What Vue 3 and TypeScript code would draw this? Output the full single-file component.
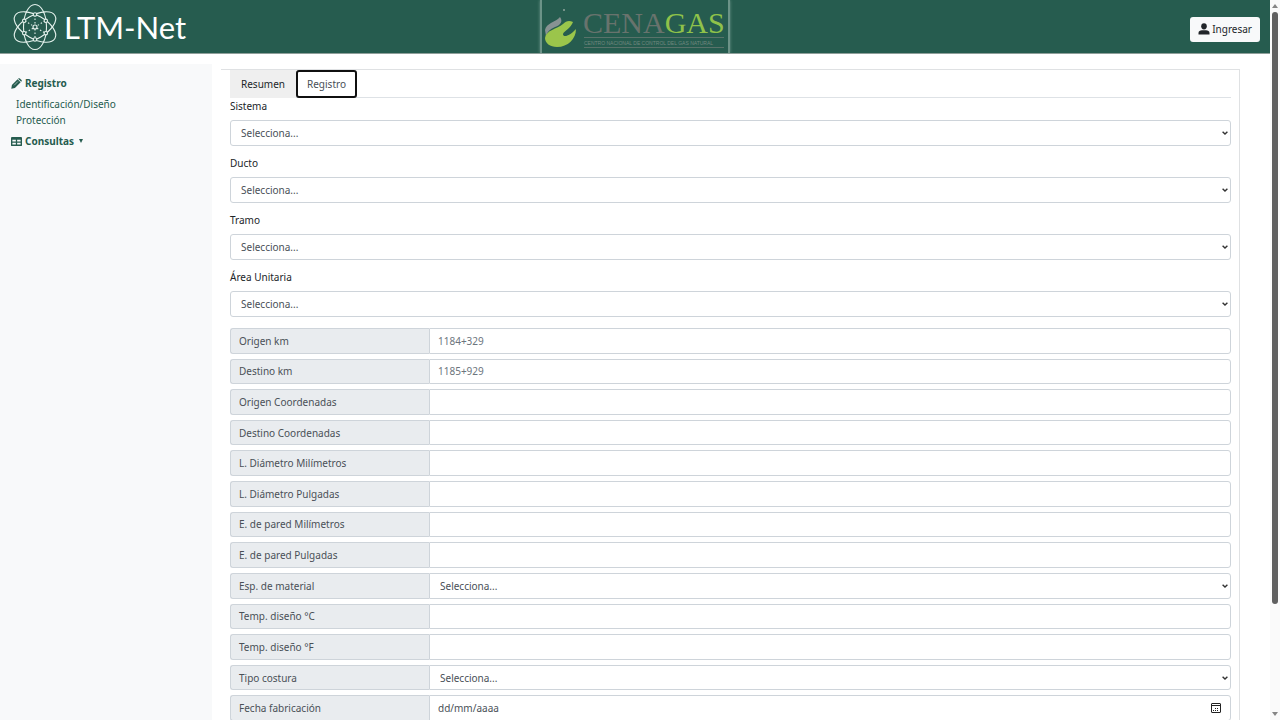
<script setup lang="ts">
import { ref } from 'vue'

interface Field {
  id: string
  label: string
  kind: 'text' | 'select' | 'date'
  placeholder?: string
}

const filters: { id: string; label: string }[] = [
  { id: 'sistema', label: 'Sistema' },
  { id: 'ducto', label: 'Ducto' },
  { id: 'tramo', label: 'Tramo' },
  { id: 'area', label: 'Área Unitaria' },
]

const fields: Field[] = [
  { id: 'origen-km', label: 'Origen km', kind: 'text', placeholder: '1184+329' },
  { id: 'destino-km', label: 'Destino km', kind: 'text', placeholder: '1185+929' },
  { id: 'origen-coord', label: 'Origen Coordenadas', kind: 'text' },
  { id: 'destino-coord', label: 'Destino Coordenadas', kind: 'text' },
  { id: 'diam-mm', label: 'L. Diámetro Milímetros', kind: 'text' },
  { id: 'diam-in', label: 'L. Diámetro Pulgadas', kind: 'text' },
  { id: 'pared-mm', label: 'E. de pared Milímetros', kind: 'text' },
  { id: 'pared-in', label: 'E. de pared Pulgadas', kind: 'text' },
  { id: 'material', label: 'Esp. de material', kind: 'select' },
  { id: 'temp-c', label: 'Temp. diseño °C', kind: 'text' },
  { id: 'temp-f', label: 'Temp. diseño °F', kind: 'text' },
  { id: 'costura', label: 'Tipo costura', kind: 'select' },
  { id: 'fecha', label: 'Fecha fabricación', kind: 'date', placeholder: 'dd/mm/aaaa' },
]

const activeTab = ref<'resumen' | 'registro'>('registro')
</script>

<template>
  <div class="window">
    <div class="page">
      <header class="topbar">
        <a class="brand" href="#">
          <svg class="atom" viewBox="0 0 46 48" fill="none" stroke="#e4f1ec" stroke-width="1.1" aria-hidden="true">
            <ellipse cx="23" cy="24" rx="11.5" ry="22.5" />
            <ellipse cx="23" cy="24" rx="11.5" ry="23" transform="rotate(60 23 24)" />
            <ellipse cx="23" cy="24" rx="11.5" ry="23" transform="rotate(-60 23 24)" />
            <path d="M23 12V36M13 18L33 30M33 18L13 30" stroke-dasharray="1.5 2" />
            <g fill="#265c4f">
              <circle cx="23" cy="24" r="2" />
              <circle cx="23" cy="11.5" r="1.7" />
              <circle cx="23" cy="36.5" r="1.7" />
              <circle cx="12.2" cy="17.8" r="1.7" />
              <circle cx="33.8" cy="17.8" r="1.7" />
              <circle cx="12.2" cy="30.2" r="1.7" />
              <circle cx="33.8" cy="30.2" r="1.7" />
            </g>
          </svg>
          <span class="brand-name">LTM-Net</span>
        </a>
        <div class="agency">
          <svg viewBox="0 0 186 53" role="img" aria-label="CENAGAS">
            <circle cx="22" cy="10" r="1" fill="#91a59d" />
            <path d="M3 30C4 23 14 22 18 17C21 21 19 25 13 27C8 29 5 32 4 36Z" fill="#879292" />
            <path d="M3 38C4 30 15 29 21 24C24 21 27 20 31 22C29 28 22 31 21 34C21 38 28 36 34 29C34 39 26 47 15 47C8 47 3 43 3 38Z" fill="#9bc54b" />
            <text class="agency-name" x="41" y="33" fill="#68736d">CENA<tspan fill="#8fc24a">GAS</tspan></text>
            <path d="M42 37.5H182M42 47.5H182" stroke="#59736a" stroke-width="1" />
            <text class="agency-sub" x="42" y="44.5" fill="#71887f">CENTRO NACIONAL DE CONTROL DEL GAS NATURAL</text>
          </svg>
        </div>
        <div class="session">
          <button class="login" type="button">
            <svg viewBox="0 0 12 12" fill="#212529" aria-hidden="true">
              <ellipse cx="6" cy="3.3" rx="2.8" ry="3.1" />
              <path d="M.5 11.5V10C.5 8 2 7.2 4 7.2H8C10 7.2 11.5 8 11.5 10V11.5Z" />
            </svg>
            <span>Ingresar</span>
          </button>
        </div>
      </header>

      <div class="body">
        <nav class="sidebar">
          <a class="section" href="#">
            <svg viewBox="0 0 12 12" fill="#265c4f" aria-hidden="true">
              <path d="M1 7.6L7.2 1.4L10.5 4.7L4.3 10.9L.3 11.7ZM7.8 .9L8.3.4Q9 0 9.7 .5L11.5 2.3Q12 3 11.6 3.6L11.1 4.1Z" />
              <path d="M3.4 8L7.6 3.8" stroke="#f8f9fa" stroke-width=".6" />
            </svg>
            <span>Registro</span>
          </a>
          <a class="sub" href="#">Identificación/Diseño</a>
          <a class="sub" href="#">Protección</a>
          <a class="section second" href="#">
            <svg viewBox="0 0 12 12" aria-hidden="true">
              <rect x="0" y="1" width="12" height="10" rx="1" fill="#265c4f" />
              <path d="M1.5 4h3.8v2H1.5zM6.7 4h3.8v2H6.7zM1.5 7.4h3.8v2H1.5zM6.7 7.4h3.8v2H6.7z" fill="#f8f9fa" />
            </svg>
            <span>Consultas</span>
            <svg class="caret" viewBox="0 0 4 4" fill="#265c4f" aria-hidden="true"><path d="M0 0H4L2 4Z" /></svg>
          </a>
        </nav>

        <main class="card">
          <div class="tabs" role="tablist">
            <button class="tab filled" type="button" role="tab" :aria-selected="activeTab === 'resumen'" @click="activeTab = 'resumen'">Resumen</button>
            <button class="tab outlined" type="button" role="tab" :aria-selected="activeTab === 'registro'" @click="activeTab = 'registro'">Registro</button>
          </div>

          <form @submit.prevent>
            <div v-for="f in filters" :key="f.id" class="group">
              <label :for="f.id">{{ f.label }}</label>
              <div class="select-box">
                <select :id="f.id"><option>Selecciona...</option></select>
                <svg class="chevron" viewBox="0 0 6 4" aria-hidden="true"><path d="M.6 .7L3 3L5.4 .7" /></svg>
              </div>
            </div>

            <div class="rows">
              <div v-for="f in fields" :key="f.id" class="row">
                <label :for="f.id">{{ f.label }}</label>
                <div v-if="f.kind === 'select'" class="select-box">
                  <select :id="f.id"><option>Selecciona...</option></select>
                  <svg class="chevron" viewBox="0 0 6 4" aria-hidden="true"><path d="M.6 .7L3 3L5.4 .7" /></svg>
                </div>
                <div v-else-if="f.kind === 'date'" class="date-box">
                  <input :id="f.id" class="date" type="text" :placeholder="f.placeholder" />
                  <button type="button" aria-label="Abrir calendario">
                    <svg viewBox="0 0 10 10" fill="none" stroke="#222" aria-hidden="true">
                      <rect x=".5" y=".5" width="9" height="9" rx=".5" />
                      <path d="M1 2.5H9" />
                      <path d="M4 5.5H8M2 7.5H7" stroke-dasharray="1 1" />
                    </svg>
                  </button>
                </div>
                <input v-else :id="f.id" type="text" :placeholder="f.placeholder" />
              </div>
            </div>
          </form>
        </main>
      </div>
    </div>

    <div class="scrollbar" aria-hidden="true">
      <svg viewBox="0 0 6 4"><path d="M0 4L3 0L6 4Z" /></svg>
      <div class="track"><div class="thumb"></div></div>
      <svg viewBox="0 0 6 4"><path d="M0 0L3 4L6 0Z" /></svg>
    </div>
  </div>
</template>

<style>
body {
  margin: 0;
  background: #fff;
}
</style>

<style scoped>
* {
  box-sizing: border-box;
}

.window {
  display: flex;
  height: 100vh;
  overflow: hidden;
  font-family: "Noto Sans", "Open Sans", sans-serif;
  font-size: 10px;
  line-height: 16px;
  color: #212529;
}

button,
input,
select {
  font: inherit;
  color: inherit;
}

a {
  color: #265c4f;
  text-decoration: none;
}

.page {
  flex: 1;
  min-width: 0;
}

.topbar {
  display: grid;
  grid-template-columns: 1fr 190px 1fr;
  align-items: center;
  height: 54px;
  background: #265c4f;
  border-bottom: 1px solid #8f9f9a;
}

.brand {
  display: flex;
  align-items: center;
  gap: 6px;
  padding-left: 12px;
  color: #fff;
}

.atom {
  width: 46px;
  height: 48px;
}

.brand-name {
  font-family: Lato, sans-serif;
  font-size: 31px;
  line-height: 40px;
}

.agency {
  height: 53px;
  border: solid #6c9388;
  border-width: 0 2px;
  box-shadow: 0 0 3px #6c9388;
  clip-path: inset(0 -4px);
}

.agency svg {
  display: block;
  width: 100%;
  height: 53px;
}

.agency-name {
  font-family: "Liberation Serif", serif;
  font-size: 30px;
}

.agency-sub {
  font-family: "Liberation Sans", sans-serif;
  font-size: 5px;
}

.session {
  display: flex;
  justify-content: flex-end;
  padding: 5px 10px 0 0;
}

.login {
  display: flex;
  align-items: center;
  gap: 2px;
  height: 25px;
  padding: 0 8px;
  border: 0;
  border-radius: 3px;
  background: #f8f9fa;
}

.login svg {
  width: 12px;
  height: 12px;
}

.body {
  display: grid;
  grid-template-columns: 212px 1fr;
  align-items: start;
}

.sidebar {
  display: flex;
  flex-direction: column;
  min-height: 100vh;
  margin-top: 10px;
  padding: 11px;
  background: #f8f9fa;
}

.section {
  display: flex;
  align-items: center;
  gap: 3px;
  margin-bottom: 5px;
  font-weight: 700;
}

.section svg {
  width: 11px;
  height: 11px;
}

.section .caret {
  width: 4px;
  height: 4px;
  margin-left: 2px;
}

.section.second {
  margin-top: 5px;
}

.sub {
  padding-left: 5px;
}

.card {
  margin: 15px 30px 0 9px;
  padding: 0 8px 8px 9px;
  border: 1px solid #dfe1e3;
  border-left: 0;
}

.tabs {
  display: flex;
  height: 28px;
  border-bottom: 1px solid #dee2e6;
}

.tab {
  height: 28px;
  padding: 0 11px;
  border: 0;
  background: #fff;
}

.filled {
  background: #efefef;
}

.outlined {
  padding: 0 9px;
  border: 2px solid #101010;
  border-radius: 3px;
  color: #495057;
}

.group {
  display: grid;
  gap: 5px;
  margin-bottom: 9px;
}

.group label {
  line-height: 17px;
}

.select-box,
.date-box {
  position: relative;
  display: grid;
  min-width: 0;
}

select,
input {
  width: 100%;
  min-width: 0;
  min-height: 25px;
  margin: 0;
  padding: 0 8px;
  border: 1px solid #ced4da;
  border-radius: 3px;
  outline: 0;
  background: #fff;
  color: #495057;
}

select {
  padding: 0 10px;
  appearance: none;
}

.group select {
  height: 26px;
}

input::placeholder {
  color: #6c757d;
  opacity: 1;
}

.date::placeholder {
  color: #495057;
}

.chevron {
  position: absolute;
  top: 50%;
  right: 3px;
  width: 6px;
  height: 4px;
  margin-top: -2px;
  fill: none;
  stroke: #333;
  stroke-width: 1.4;
  pointer-events: none;
}

.rows {
  display: grid;
  grid-auto-rows: 1fr;
  gap: 5px;
  min-height: 393px;
  margin-top: 11px;
}

.row {
  display: grid;
  grid-template-columns: 199px 1fr;
}

.row label {
  display: flex;
  align-items: center;
  padding: 0 8px;
  border: 1px solid #ced4da;
  border-right: 0;
  border-radius: 3px 0 0 3px;
  background: #e9ecef;
  color: #495057;
}

.row input,
.row select {
  border-radius: 0 3px 3px 0;
}

.date-box button {
  position: absolute;
  top: 50%;
  right: 10px;
  width: 10px;
  height: 10px;
  margin-top: -5px;
  padding: 0;
  border: 0;
  background: none;
}

.date-box svg {
  display: block;
  width: 10px;
  height: 10px;
}

.scrollbar {
  display: flex;
  flex-direction: column;
  align-items: center;
  width: 10px;
  padding: 4px 0;
  background: #fafafa;
}

.scrollbar svg {
  width: 6px;
  height: 4px;
  fill: #858585;
}

.track {
  flex: 1;
  padding: 4px 0;
}

.thumb {
  width: 6px;
  height: 85%;
  border-radius: 3px;
  background: #606060;
}
</style>
